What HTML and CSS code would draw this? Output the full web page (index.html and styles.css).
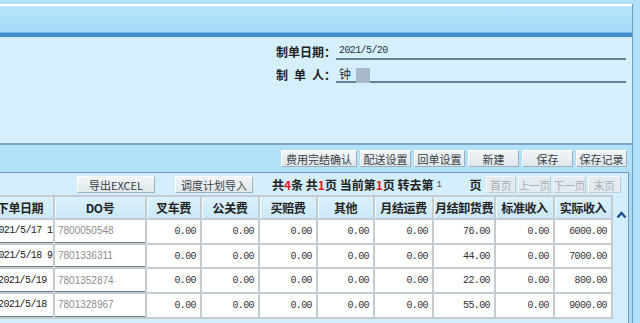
FILE: index.html
```html
<!DOCTYPE html>
<html lang="zh-CN">
<head>
    <meta charset="UTF-8">
    <title>费用完结</title>
    <link rel="stylesheet" href="styles.css">
</head>
<body>
    <div class="frame">
        <div class="titlebar"></div>

        <div class="info-panel">
            <div class="info-row">
                <span class="info-label">制单日期：</span>
                <span class="info-field">2021/5/20</span>
            </div>
            <div class="info-row">
                <span class="info-label">制&ensp;单&ensp;人：</span>
                <span class="info-field cjk">钟<span class="mask"></span></span>
            </div>
        </div>

        <div class="toolbar">
            <button class="btn btn-wide">费用完结确认</button>
            <button class="btn">配送设置</button>
            <button class="btn">回单设置</button>
            <button class="btn">新建</button>
            <button class="btn">保存</button>
            <button class="btn">保存记录</button>
        </div>

        <div class="grid-area">
            <div class="pager">
                <button class="btn btn-export">导出EXCEL</button>
                <button class="btn btn-export">调度计划导入</button>
                <span class="pager-info">共<em>4</em>条 共<em>1</em>页 当前第<em>1</em>页 转去第</span>
                <span class="page-input">1</span>
                <span class="pager-info">页</span>
                <div class="pager-nav">
                    <button class="btn btn-off">首页</button>
                    <button class="btn btn-off">上一页</button>
                    <button class="btn btn-off">下一页</button>
                    <button class="btn btn-off">末页</button>
                </div>
            </div>

            <div class="grid-wrap">
                <table class="grid">
                    <colgroup>
                        <col style="width:66px"><col style="width:90px"><col style="width:53px">
                        <col style="width:56px"><col style="width:56px"><col style="width:55px">
                        <col style="width:57px"><col style="width:60px"><col style="width:57px">
                        <col style="width:56px">
                    </colgroup>
                    <thead>
                        <tr>
                            <th>下单日期</th><th>DO号</th><th>叉车费</th><th>公关费</th><th>买赔费</th>
                            <th>其他</th><th>月结运费</th><th>月结卸货费</th><th>标准收入</th><th>实际收入</th>
                        </tr>
                    </thead>
                    <tbody>
                        <tr>
                            <td class="date shifted">2021/5/17 12:30</td><td class="do">7800050548</td>
                            <td>0.00</td><td>0.00</td><td>0.00</td><td>0.00</td><td>0.00</td><td>76.00</td><td>0.00</td><td>6000.00</td>
                        </tr>
                        <tr>
                            <td class="date shifted">2021/5/18 9:15</td><td class="do">7801336311</td>
                            <td>0.00</td><td>0.00</td><td>0.00</td><td>0.00</td><td>0.00</td><td>44.00</td><td>0.00</td><td>7000.00</td>
                        </tr>
                        <tr>
                            <td class="date">2021/5/19</td><td class="do">7801352874</td>
                            <td>0.00</td><td>0.00</td><td>0.00</td><td>0.00</td><td>0.00</td><td>22.00</td><td>0.00</td><td>800.00</td>
                        </tr>
                        <tr>
                            <td class="date">2021/5/18</td><td class="do">7801328967</td>
                            <td>0.00</td><td>0.00</td><td>0.00</td><td>0.00</td><td>0.00</td><td>55.00</td><td>0.00</td><td>9000.00</td>
                        </tr>
                    </tbody>
                </table>
                <div class="scroll-col">
                    <svg width="11" height="8" viewBox="0 0 11 8"><polyline points="1.5,6.5 5.5,2 9.5,6.5" fill="none" stroke="#1c4f8c" stroke-width="2.4"/></svg>
                </div>
            </div>
        </div>
    </div>
</body>
</html>
```

FILE: styles.css
```css
body {
    margin: 0;
    padding-top: 4px;
    width: 640px;
    height: 323px;
    overflow: hidden;
    background-color: #b0e0fa;
    font-family: "Noto Sans CJK SC", sans-serif;
    font-size: 12px;
    color: #222;
}
.frame {
    width: 632px;
    height: 319px;
    border-right: 1px solid #6b9cc3;
    background-color: #a9dcf8;
    overflow: hidden;
}
.titlebar {
    height: 27px;
    border-top: 2px solid #fff;
    border-bottom: 4px solid #3f8ed2;
    background: linear-gradient(#b6e5fc, #a3daf8);
    box-shadow: inset 0 -1px 0 #76b8e6;
}
.info-panel {
    height: 100px;
    padding-top: 6px;
    background-color: #d5effd;
    border-bottom: 2px solid #7ea7c3;
}
.info-row {
    display: flex;
    align-items: flex-end;
    height: 17px;
    margin: 0 6px 6px 276px;
}
.info-label {
    width: 60px;
    font-weight: bold;
    line-height: 16px;
    white-space: nowrap;
}
.info-field {
    flex: 1;
    height: 15px;
    padding-left: 3px;
    border-bottom: 2px solid #62819b;
    font-family: "Liberation Mono", monospace;
    font-size: 10px;
    letter-spacing: -0.6px;
    line-height: 15px;
    color: #2c3340;
}
.info-field.cjk {
    font-family: "Noto Sans CJK SC", sans-serif;
    font-size: 12px;
    letter-spacing: 0;
}
.mask {
    display: inline-block;
    width: 14px;
    height: 15px;
    margin-left: 5px;
    vertical-align: -4px;
    background-color: #a8b9c9;
}
.toolbar {
    display: flex;
    justify-content: flex-end;
    align-items: center;
    gap: 3px;
    height: 27px;
    padding-right: 5px;
    background-color: #b2e2fa;
}
.btn {
    width: 51px;
    height: 17px;
    padding: 0;
    border: 1px solid;
    border-color: #fbfdfe #9fb0bd #9fb0bd #fbfdfe;
    background: linear-gradient(#f1f5f8, #dfe7ec);
    font-family: "Noto Sans CJK SC", sans-serif;
    font-size: 11px;
    line-height: 14px;
    color: #3a3f44;
    white-space: nowrap;
    overflow: visible;
}
.btn-wide {
    width: 76px;
}
.btn-export {
    width: 78px;
    margin-right: 20px;
}
.btn-export:first-child {
    margin-left: 77px;
}
.btn-export:nth-child(2) {
    margin-right: 19px;
}
.btn-off {
    color: #a9afb4;
    background: #e4ebf0;
    border-color: #f4f8fa #c2ccd3 #c2ccd3 #f4f8fa;
}
.grid-area {
    height: 150px;
    margin-right: 3px;
    border-top: 1px solid #6d9bbf;
    border-right: 1px solid #6d9bbf;
    background-color: #d3eefc;
}
.pager {
    display: flex;
    align-items: center;
    height: 21px;
    padding-top: 1px;
}
.pager-info {
    font-weight: bold;
    white-space: pre;
}
.pager-info em {
    font-style: normal;
    color: #e01a1a;
}
.page-input {
    width: 33px;
    padding-left: 3px;
    font-family: "Liberation Mono", monospace;
    font-size: 9px;
    color: #555;
}
.pager-nav {
    display: flex;
    gap: 2px;
    margin-left: 4px;
}
.pager-nav .btn {
    width: 33px;
    letter-spacing: -0.5px;
}
.pager-nav .btn:first-child {
    width: 30px;
}
.grid-wrap {
    display: flex;
    align-items: flex-start;
}
.grid {
    flex: none;
    width: 628px;
    margin-left: -15px;
    table-layout: fixed;
    border-collapse: separate;
    border-spacing: 2px;
    background-color: #c4cbd1;
}
.grid th {
    height: 21px;
    padding: 0;
    background: linear-gradient(#dcf1fc, #cbe8f8);
    box-shadow: inset 1px 0 0 #f4fbff;
    font-weight: bold;
    letter-spacing: -0.4px;
    text-align: center;
    white-space: nowrap;
    overflow: hidden;
}
.grid td {
    height: 21.7px;
    padding: 0 4px 0 0;
    background-color: #fff;
    font-family: "Liberation Mono", monospace;
    font-size: 10px;
    letter-spacing: -0.6px;
    color: #333;
    text-align: right;
    white-space: nowrap;
    overflow: hidden;
}
.grid td.date {
    padding: 0 0 0 11px;
    text-align: left;
    color: #222;
    border-bottom: 1px solid #6d7f8e;
}
.grid td.shifted {
    text-indent: -5px;
}
.grid td.do {
    padding: 0 0 0 3px;
    text-align: left;
    font-family: "Liberation Sans", sans-serif;
    letter-spacing: 0;
    color: #8d8d8d;
    border-bottom: 1px solid #6d7f8e;
}
.scroll-col {
    width: 15px;
    padding: 10px 0 0 3px;
}
```
